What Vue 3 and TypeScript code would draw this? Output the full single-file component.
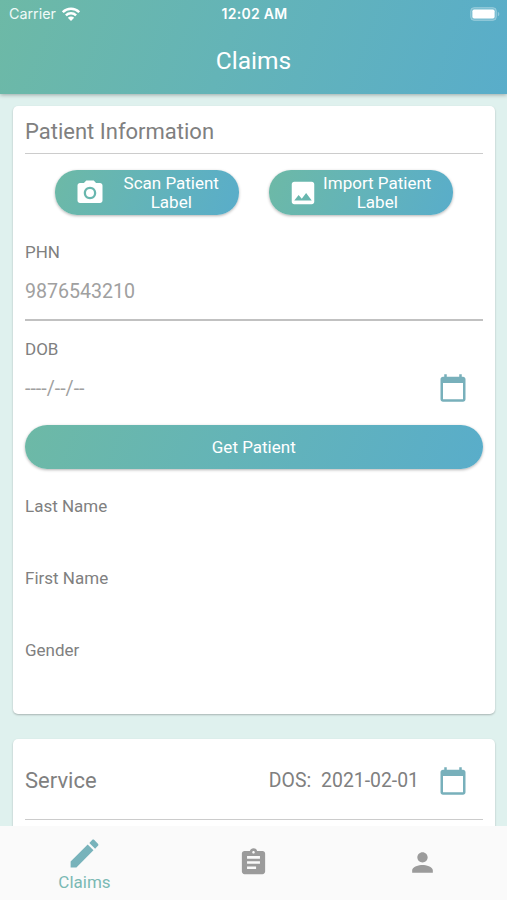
<script setup lang="ts">
import { ref } from 'vue'

interface Action { label: string; icon: string; kind: string }
interface Tab { id: string; label: string; icon: string }

const icons = {
  camera: 'M12 8.8a3.2 3.2 0 1 0 0 6.4 3.2 3.2 0 0 0 0-6.4zM9 2L7.17 4H4c-1.1 0-2 .9-2 2v12c0 1.1.9 2 2 2h16c1.1 0 2-.9 2-2V6c0-1.1-.9-2-2-2h-3.17L15 2H9zm3 15c-2.76 0-5-2.24-5-5s2.24-5 5-5 5 2.24 5 5-2.24 5-5 5z',
  image: 'M21 19V5c0-1.1-.9-2-2-2H5c-1.1 0-2 .9-2 2v14c0 1.1.9 2 2 2h14c1.1 0 2-.9 2-2zM8.5 13.5l2.5 3.01L14.5 12l4.5 6H5l3.5-4.5z',
  calendar: 'M20 3h-1V1h-2v2H7V1H5v2H4c-1.1 0-2 .9-2 2v16c0 1.1.9 2 2 2h16c1.1 0 2-.9 2-2V5c0-1.1-.9-2-2-2zm0 18H4V8h16v13z',
  edit: 'M3 17.25V21h3.75L17.81 9.94l-3.75-3.75L3 17.25zM20.71 7.04c.39-.39.39-1.02 0-1.41l-2.34-2.34c-.39-.39-1.02-.39-1.41 0l-1.83 1.83 3.75 3.75 1.83-1.83z',
  assignment: 'M19 3h-4.18C14.4 1.84 13.3 1 12 1c-1.3 0-2.4.84-2.82 2H5c-1.1 0-2 .9-2 2v14c0 1.1.9 2 2 2h14c1.1 0 2-.9 2-2V5c0-1.1-.9-2-2-2zm-7 0c.55 0 1 .45 1 1s-.45 1-1 1-1-.45-1-1 .45-1 1-1zm2 14H7v-2h7v2zm3-4H7v-2h10v2zm0-4H7V7h10v2z',
  person: 'M12 12c2.21 0 4-1.79 4-4s-1.79-4-4-4-4 1.79-4 4 1.79 4 4 4zm0 2c-2.67 0-8 1.34-8 4v2h16v-2c0-2.66-5.33-4-8-4z',
}

const actions: Action[] = [
  { label: 'Scan Patient Label', icon: icons.camera, kind: 'scan' },
  { label: 'Import Patient Label', icon: icons.image, kind: 'import' },
]
const details = ['Last Name', 'First Name', 'Gender']
const tabs: Tab[] = [
  { id: 'claims', label: 'Claims', icon: icons.edit },
  { id: 'records', label: '', icon: icons.assignment },
  { id: 'profile', label: '', icon: icons.person },
]
const activeTab = ref('claims')
const phn = ref('')
</script>

<template>
  <div class="screen">
    <header class="header">
      <div class="status">
        <div class="carrier">
          <span>Carrier</span>
          <svg class="wifi" viewBox="0 0 18 14">
            <path d="M.8 5.2C5.3.7 12.7.7 17.2 5.2M3.9 8.3c2.9-2.8 7.3-2.8 10.2 0" fill="none" stroke="#fff" stroke-width="2.5" />
            <path d="M9 13.9L5.8 10.8c1.8-1.6 4.6-1.6 6.4 0z" fill="#fff" />
          </svg>
        </div>
        <span class="time">12:02 AM</span>
        <svg class="battery" viewBox="0 0 30 14">
          <rect x=".6" y=".6" width="25.8" height="12.8" rx="3.6" fill="#ffffff33" stroke="#ffffff44" />
          <rect x="2.4" y="2.4" width="22.2" height="9.2" rx="1.8" fill="#fff" />
          <path d="M27.8 4.7c2 .8 2 3.8 0 4.6z" fill="#ffffff55" />
        </svg>
      </div>
      <h1 class="title">Claims</h1>
    </header>

    <main class="content">
      <section class="card patient">
        <h2 class="heading">Patient Information</h2>
        <div class="actions">
          <button v-for="a in actions" :key="a.kind" class="pill action" :class="a.kind">
            <svg class="icon" viewBox="0 0 24 24"><path :d="a.icon" fill-rule="evenodd" /></svg>
            <span class="action-label">{{ a.label }}</span>
          </button>
        </div>
        <label class="label" for="phn">PHN</label>
        <input id="phn" v-model="phn" class="input" placeholder="9876543210">
        <div class="label dob">DOB</div>
        <div class="date-row">
          <span class="date-value">----/--/--</span>
          <svg class="icon calendar" viewBox="0 0 24 24"><path :d="icons.calendar" /></svg>
        </div>
        <button class="pill submit">Get Patient</button>
        <div v-for="d in details" :key="d" class="label detail">{{ d }}</div>
      </section>

      <section class="card service">
        <div class="service-row">
          <h2 class="service-title">Service</h2>
          <span class="dos">DOS:</span>
          <span class="dos-date">2021-02-01</span>
          <svg class="icon calendar" viewBox="0 0 24 24"><path :d="icons.calendar" /></svg>
        </div>
      </section>
    </main>

    <nav class="tabs">
      <button v-for="t in tabs" :key="t.id" class="tab" :class="{ active: t.id === activeTab }" @click="activeTab = t.id">
        <svg class="tab-icon" viewBox="0 0 24 24"><path :d="t.icon" /></svg>
        <span v-if="t.label">{{ t.label }}</span>
      </button>
    </nav>
  </div>
</template>

<style>
body { margin: 0; }
</style>

<style scoped>
* { box-sizing: border-box; }
.screen {
  width: 507px;
  height: 900px;
  display: flex;
  flex-direction: column;
  overflow: hidden;
  background: #dff1ee;
  font-family: Roboto, sans-serif;
  color: #808080;
}
button { border: 0; padding: 0; font: inherit; }
.header {
  flex: none;
  height: 94px;
  color: #fff;
  background: linear-gradient(110deg, #6db9a6, #64b4b7 45%, #59adca);
  box-shadow: 0 1px 4px #0000004d;
}
.status {
  display: grid;
  grid-template-columns: 1fr auto 1fr;
  align-items: center;
  height: 27px;
  padding: 0 7px 0 9px;
  font-family: Inter, sans-serif;
  font-size: 14.3px;
}
.carrier { display: flex; align-items: center; gap: 6px; color: #f0faf8; }
.wifi { width: 18px; height: 14px; }
.time { font-weight: 600; font-size: 14px; letter-spacing: .3px; }
.battery { width: 30px; height: 14px; justify-self: end; }
.title {
  margin: 0;
  padding-top: 18px;
  text-align: center;
  font-size: 24.5px;
  line-height: 32px;
  font-weight: 400;
}
.content { flex: 1; min-height: 0; overflow: hidden; padding: 12px 12px 0 13px; }
.card {
  padding: 0 12.5px 0 12px;
  border-radius: 5px;
  background: #fff;
  box-shadow: 0 1px 2px #00000040;
}
.patient { height: 608px; }
.heading {
  margin: 0;
  height: 48px;
  border-bottom: 1px solid #ccc;
  font-size: 22px;
  line-height: 51px;
  font-weight: 400;
}
.actions { display: flex; justify-content: space-between; padding: 16px 30px 0 30px; }
.pill {
  border-radius: 22px;
  color: #fff;
  background: linear-gradient(110deg, #6db9a6, #64b4b7 45%, #59adca);
  box-shadow: 0 1px 3px #0000004d;
  font-size: 17px;
}
.action { display: flex; align-items: center; width: 184px; height: 45px; }
.icon { flex: none; width: 30px; height: 30px; fill: currentColor; }
.action .icon { margin-left: 19.5px; }
.action-label { flex: 1; line-height: 19px; padding: 1px 17px 0 16px; }
.import .action-label { padding: 1px 16px 0 0; }
.label { display: block; font-size: 17px; line-height: 20px; }
.label[for] { margin-top: 27px; }
.input {
  display: block;
  width: 100%;
  height: 58px;
  margin-top: 1px;
  padding: 0;
  border: 0;
  border-bottom: 2px solid #c1c1c1;
  outline: 0;
  background: none;
  font: 19.6px Roboto, sans-serif;
  letter-spacing: 0;
}
.input::placeholder { color: #a0a0a0; }
.dob { margin-top: 18px; }
.date-row { display: flex; align-items: center; justify-content: space-between; height: 58px; padding-right: 14.5px; }
.date-value { color: #a0a0a0; font-size: 19.6px; }
.calendar { color: #78b0bb; }
.submit { display: block; width: 100%; height: 44px; margin-top: 8px; }
.detail { margin-top: 27px; margin-bottom: 52px; }
.detail + .detail { margin-top: 0; }
.service { margin-top: 25px; height: 120px; }
.service-row { display: flex; align-items: center; height: 81px; padding: 3px 14.5px 0 0; border-bottom: 1px solid #ccc; }
.service-title { flex: 1; margin: 0; font-size: 22px; font-weight: 400; }
.dos { margin-right: 10px; font-size: 19.4px; }
.dos-date { margin-right: 19px; font-size: 19.4px; }
.tabs { flex: none; display: grid; grid-template-columns: repeat(3, 1fr); height: 74px; background: #fafafa; }
.tab {
  display: flex;
  flex-direction: column;
  align-items: center;
  justify-content: center;
  padding-bottom: 2px;
  background: none;
  color: #9b9b9b;
  font-size: 17px;
  line-height: 20px;
}
.tab-icon { width: 31px; height: 31px; fill: currentColor; }
.active { padding: 0; color: #7ab9b4; }
.active .tab-icon { width: 37px; height: 37px; color: #78b3bb; }
</style>
